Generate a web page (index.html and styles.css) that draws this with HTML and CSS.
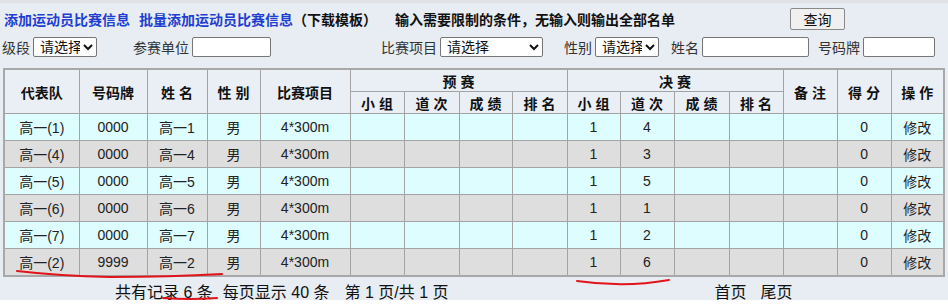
FILE: index.html
```html
<!DOCTYPE html>
<html lang="zh-CN">
<head>
    <meta charset="UTF-8">
    <title>运动员比赛信息</title>
    <link rel="stylesheet" href="styles.css">
</head>
<body>

<div class="page">
    <div class="topbar">
        <a class="link" href="#">添加运动员比赛信息</a>
        <a class="link gap" href="#">批量添加运动员比赛信息</a>
        <span class="tpl">（下载模板）</span>
        <span class="tip">输入需要限制的条件，无输入则输出全部名单</span>
        <button class="btn">查询</button>
    </div>

    <div class="filters">
        <label class="lbl">级段</label>
        <select class="sel sel-s"><option>请选择</option></select>
        <label class="lbl f-unit">参赛单位</label>
        <input class="inp inp-unit" type="text">
        <label class="lbl f-item">比赛项目</label>
        <select class="sel sel-l"><option>请选择</option></select>
        <label class="lbl f-sex">性别</label>
        <select class="sel sel-s"><option>请选择</option></select>
        <label class="lbl f-name">姓名</label>
        <input class="inp inp-name" type="text">
        <label class="lbl f-no">号码牌</label>
        <input class="inp inp-no" type="text">
    </div>

    <table class="list">
        <colgroup>
            <col style="width:75px"><col style="width:68px"><col style="width:60px"><col style="width:53px"><col style="width:90px">
            <col style="width:54px"><col style="width:55px"><col style="width:53px"><col style="width:55px">
            <col style="width:53px"><col style="width:54px"><col style="width:55px"><col style="width:54px">
            <col style="width:54px"><col style="width:54px"><col style="width:53px">
        </colgroup>
        <thead>
            <tr>
                <th rowspan="2">代表队</th>
                <th rowspan="2">号码牌</th>
                <th rowspan="2">姓 名</th>
                <th rowspan="2">性 别</th>
                <th rowspan="2">比赛项目</th>
                <th colspan="4">预 赛</th>
                <th colspan="4">决 赛</th>
                <th rowspan="2">备 注</th>
                <th rowspan="2">得 分</th>
                <th rowspan="2">操 作</th>
            </tr>
            <tr>
                <th>小 组</th><th>道 次</th><th>成 绩</th><th>排 名</th>
                <th>小 组</th><th>道 次</th><th>成 绩</th><th>排 名</th>
            </tr>
        </thead>
        <tbody id="rows"></tbody>
    </table>

    <div class="pager">
        <span>共有记录 6 条</span>
        <span class="p1">每页显示 40 条</span>
        <span class="p2">第 1 页/共 1 页</span>
        <a class="p3" href="#">首页</a>
        <a class="p4" href="#">尾页</a>
    </div>

    <svg class="marks" width="948" height="304" viewBox="0 0 948 304">
        <path d="M17 271 Q60 276 110 277 Q170 277 222 274" />
        <path d="M163 298 Q190 300 217 298" />
        <path d="M577 281 Q625 288 669 280" />
    </svg>
</div>

<script>
    const data = [
        ["高一(1)", "0000", "高一1", "4"],
        ["高一(4)", "0000", "高一4", "3"],
        ["高一(5)", "0000", "高一5", "5"],
        ["高一(6)", "0000", "高一6", "1"],
        ["高一(7)", "0000", "高一7", "2"],
        ["高一(2)", "9999", "高一2", "6"]
    ];

    document.getElementById('rows').innerHTML = data.map((r, i) => `
        <tr class="${i % 2 ? 'even' : 'odd'}">
            <td>${r[0]}</td><td>${r[1]}</td><td>${r[2]}</td><td>男</td><td>4*300m</td>
            <td></td><td></td><td></td><td></td>
            <td>1</td><td>${r[3]}</td><td></td><td></td>
            <td></td><td>0</td><td>修改</td>
        </tr>`).join('');
</script>

</body>
</html>
```

FILE: styles.css
```css
body { margin: 0; background: #fff; font-family: "Liberation Sans", "Noto Sans CJK SC", sans-serif; font-size: 14px; color: #222; }
.page { position: relative; width: 948px; height: 300px; background: #e8edf3; border-top: 3px solid #e0e2e5; box-sizing: border-box; }

.topbar { display: flex; align-items: center; height: 31px; padding-left: 4px; font-weight: bold; font-size: 14px; }
.link { color: #1f3fd0; text-decoration: none; }
.link.gap { margin-left: 9px; }
.tpl { color: #111; }
.tip { color: #111; margin-left: 18px; }
.btn { margin-left: 115px; width: 55px; height: 22px; padding: 0; font-family: inherit; font-size: 14px; color: #111; background: #f0f0f0; border: 1px solid #8a8a8a; border-radius: 2px; }

.filters { display: flex; align-items: center; height: 26px; padding-left: 2px; }
.lbl { color: #333; margin-right: 3px; }
.sel { height: 20px; font-family: inherit; font-size: 14px; padding: 0 0 0 2px; border: 1px solid #767676; border-radius: 2px; background: #fff; color: #111; }
.sel-s { width: 64px; }
.sel-l { width: 103px; }
.inp { height: 20px; box-sizing: border-box; border: 1px solid #767676; border-radius: 2px; background: #fff; padding: 0 2px; }
.inp-unit { width: 79px; }
.inp-name { width: 107px; }
.inp-no { width: 72px; }
.f-unit { margin-left: 36px; }
.f-item { margin-left: 110px; }
.f-sex { margin-left: 21px; }
.f-name { margin-left: 12px; }
.f-no { margin-left: 9px; }

.list { margin: 8px 0 0 3px; border-collapse: collapse; table-layout: fixed; width: 941px; border: 2px solid #a8a8a8; }
.list th, .list td { border: 1px solid #a3a3a3; text-align: center; padding: 0; }
.list th { background: #eaeff6; font-weight: bold; height: 21px; color: #111; }
.list td { height: 26px; color: #222; }
.list tr.odd td { background: #ddfdff; }
.list tr.even td { background: #dedede; }

.pager { display: flex; align-items: center; height: 28px; padding-left: 115px; font-size: 16px; color: #111; }
.pager a { color: #111; text-decoration: none; }
.p1 { margin-left: 10px; }
.p2 { margin-left: 15px; }
.p3 { margin-left: 266px; }
.p4 { margin-left: 14px; }

.marks { position: absolute; left: 0; top: -3px; pointer-events: none; }
.marks path { fill: none; stroke: #e0141a; stroke-width: 2; stroke-linecap: round; }
```
